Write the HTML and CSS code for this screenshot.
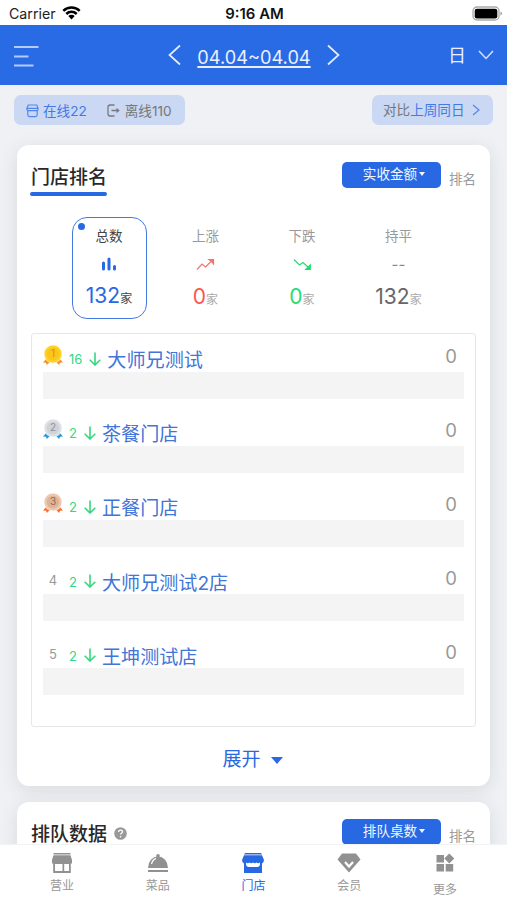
FILE: index.html
```html
<!DOCTYPE html>
<html lang="zh-CN">
<head>
<meta charset="utf-8">
<title>门店排名</title>
<link rel="stylesheet" href="styles.css">
</head>
<body>
<div class="app">
  <div class="status">
    <div class="carrier"><span>Carrier</span>
      <svg width="19" height="15" viewBox="0 0 19 15"><g fill="none" stroke="#000" stroke-width="2.500"><path d="M1.300 5.800a11.700 11.700 0 0 1 16.400 0"/><path d="M4.300 9a7.400 7.400 0 0 1 10.400 0"/></g><path d="M6.300 11.100a4.600 4.600 0 0 1 6.400 0L9.500 14.400z"/></svg>
    </div>
    <div class="clock">9:16 AM</div>
    <div class="battery"><svg width="31" height="16" viewBox="0 0 31 16"><rect x="1" y="1" width="26" height="13" rx="4" fill="#fff" stroke="#aaa" stroke-width="1.300"/><rect x="2.700" y="2.800" width="22.600" height="9.600" rx="2.200"/><path d="M28.500 5.400q3 2.200 0 4.400z" fill="#999"/></svg></div>
  </div>
  <header class="header">
    <svg class="menu" width="26" height="24" viewBox="0 0 26 24" fill="none" stroke="#b4ccfb" stroke-width="2"><path d="M0 2h24.500M0 11.500h14.500M0 20.500h19.500"/></svg>
    <div class="dates">
      <svg width="13" height="22" viewBox="0 0 13 22" fill="none" stroke="#e5edff" stroke-width="1.700"><path d="M12 1.500 1.500 11 12 20.500"/></svg>
      <span class="range">04.04~04.04</span>
      <svg width="13" height="22" viewBox="0 0 13 22" fill="none" stroke="#e5edff" stroke-width="1.700"><path d="M1 1.500 11.500 11 1 20.500"/></svg>
    </div>
    <div class="period"><span>日</span><svg width="16" height="10" viewBox="0 0 16 10" fill="none" stroke="#d5e2ff" stroke-width="1.500"><path d="m1 1 7 7.500L15 1"/></svg></div>
  </header>
  <main class="content">
    <div class="filters">
      <div class="pill state">
        <svg width="13" height="14" viewBox="0 0 13 14" fill="none" stroke="#5485ea" stroke-width="1.200"><path d="M2.200 1h8.600l1.400 3.600q0 2-1.600 2H2.400q-1.600 0-1.600-2zM1 4.300h11M1.800 6.800v4q0 1.800 1.800 1.800h5.800q1.800 0 1.800-1.800v-4"/></svg>
        <span class="online">在线22</span>
        <svg class="exit" width="14" height="14" viewBox="0 0 14 14" fill="none" stroke="#77797f" stroke-width="1.300"><path d="M7.500 1H3.200Q1 1 1 3.200v6.600Q1 12 3.200 12h4.300M4.500 6.500h7"/><path d="m9.500 3.800 3.200 2.700-3.200 2.700z" fill="#77797f" stroke="none"/></svg>
        <span>离线110</span>
      </div>
      <div class="pill compare"><span>对比<b>上周同日</b></span><svg width="8" height="12" viewBox="0 0 8 12" fill="none" stroke="#5485ea" stroke-width="1.200"><path d="m1 1 6 5-6 5"/></svg></div>
    </div>

    <section class="card ranking">
      <div class="card-head">
        <h2 class="underlined">门店排名</h2>
        <div class="sort"><button class="select">实收金额<i class="caret"></i></button><span>排名</span></div>
      </div>
      <div class="stats">
        <div class="stat selected"><i class="dot"></i>
          <div class="label">总数</div>
          <div class="glyph"><svg width="16" height="14" viewBox="0 0 16 14" stroke="#2868e2" stroke-width="3" stroke-linecap="round"><path d="M2.500 6v6M8 2v10M13.500 9.500V12"/></svg></div>
          <div class="value">132<small>家</small></div>
        </div>
        <div class="stat up">
          <div class="label">上涨</div>
          <div class="glyph"><svg width="19" height="13" viewBox="0 0 19 13" fill="none" stroke="#f4736e" stroke-width="1.200"><path d="m1 11.500 5-5.500 3.500 3 5.500-5.500"/><path d="M13 1.500h4.500V6L15.500 3.500z" fill="#f4736e"/></svg></div>
          <div class="value">0<small>家</small></div>
        </div>
        <div class="stat down">
          <div class="label">下跌</div>
          <div class="glyph"><svg width="19" height="13" viewBox="0 0 19 13" fill="none" stroke="#24dc72" stroke-width="1.200"><path d="m1 1.500 5.500 5.500L10 4.500 15 9"/><path d="M17.300 7v4.500h-4.600z" fill="#24dc72"/></svg></div>
          <div class="value">0<small>家</small></div>
        </div>
        <div class="stat">
          <div class="label">持平</div>
          <div class="glyph">--</div>
          <div class="value">132<small>家</small></div>
        </div>
      </div>
      <ol class="list">
        <li><div class="row"><span class="medal"><svg width="20" height="21" viewBox="0 0 20 21"><path d="M4 13 0 17.500l3 .2.800 2.300L8 16zM16 13l4 4.500-3 .2-.8 2.300L12 16z" fill="#f5922c"/><circle cx="10" cy="9" r="9" fill="#ffd21f" stroke="#fff" stroke-width=".6"/><circle cx="10" cy="9" r="6.300" fill="#fbc51b"/><text x="10" y="12.200" fill="#d98d0b">1</text></svg></span><span class="delta">16</span><svg class="arrow" width="12" height="14" viewBox="0 0 12 14"><path d="M6 .5V13M.7 7.700 6 13l5.300-5.300"/></svg><span class="name">大师兄测试</span><span class="amount">0</span></div><div class="bar"></div></li>
        <li><div class="row"><span class="medal"><svg width="20" height="21" viewBox="0 0 20 21"><path d="M4 13 0 17.500l3 .2.800 2.300L8 16zM16 13l4 4.500-3 .2-.8 2.300L12 16z" fill="#2499dc"/><circle cx="10" cy="9" r="9" fill="#dddfe4" stroke="#fff" stroke-width=".6"/><circle cx="10" cy="9" r="6.300" fill="#cfd3d9"/><text x="10" y="12.200" fill="#8d939d">2</text></svg></span><span class="delta">2</span><svg class="arrow" width="12" height="14" viewBox="0 0 12 14"><path d="M6 .5V13M.7 7.700 6 13l5.300-5.300"/></svg><span class="name">茶餐门店</span><span class="amount">0</span></div><div class="bar"></div></li>
        <li><div class="row"><span class="medal"><svg width="20" height="21" viewBox="0 0 20 21"><path d="M4 13 0 17.500l3 .2.800 2.300L8 16zM16 13l4 4.500-3 .2-.8 2.300L12 16z" fill="#f9712d"/><circle cx="10" cy="9" r="9" fill="#edc8b1" stroke="#fff" stroke-width=".6"/><circle cx="10" cy="9" r="6.300" fill="#dfb397"/><text x="10" y="12.200" fill="#956a51">3</text></svg></span><span class="delta">2</span><svg class="arrow" width="12" height="14" viewBox="0 0 12 14"><path d="M6 .5V13M.7 7.700 6 13l5.300-5.300"/></svg><span class="name">正餐门店</span><span class="amount">0</span></div><div class="bar"></div></li>
        <li><div class="row"><span class="medal">4</span><span class="delta">2</span><svg class="arrow" width="12" height="14" viewBox="0 0 12 14"><path d="M6 .5V13M.7 7.700 6 13l5.300-5.300"/></svg><span class="name">大师兄测试2店</span><span class="amount">0</span></div><div class="bar"></div></li>
        <li><div class="row"><span class="medal">5</span><span class="delta">2</span><svg class="arrow" width="12" height="14" viewBox="0 0 12 14"><path d="M6 .5V13M.7 7.700 6 13l5.300-5.300"/></svg><span class="name">王坤测试店</span><span class="amount">0</span></div><div class="bar"></div></li>
      </ol>
      <div class="expand">展开<i class="caret"></i></div>
    </section>

    <section class="card queue">
      <div class="card-head">
        <h2>排队数据</h2>
        <svg class="help" width="13" height="13" viewBox="0 0 13 13"><circle cx="6.500" cy="6.500" r="6.300" fill="#999"/><path d="M4.600 5q0-1.900 2-1.900t1.900 1.700q0 .9-1 1.500-.9.500-.9 1.300" fill="none" stroke="#fff" stroke-width="1.300"/><circle cx="6.600" cy="9.600" r=".8" fill="#fff"/></svg>
        <div class="sort"><button class="select">排队桌数<i class="caret"></i></button><span>排名</span></div>
      </div>
    </section>
  </main>
  <nav class="tabs">
    <a class="tab"><svg width="22" height="20" viewBox="0 0 22 20"><path d="M2.500 0h17v1.500h-17zM2.500 2.300h17L21 7v3.500h-1.200V20H2.200v-9.500H1V7z" fill="#919191"/><path d="M4 11h7.500v7H4zM13.200 11H18v7h-4.800z" fill="#fff"/></svg><span>营业</span></a>
    <a class="tab"><svg width="22" height="20" viewBox="0 0 22 20" fill="#919191"><circle cx="11" cy="2.800" r="1.800"/><path d="M1 15a10 11.500 0 0 1 20 0zM1 17h20v2H1z"/><path d="M4.500 11q1-4.200 4.500-5.600" stroke="#fff" stroke-width="1.200" fill="none"/></svg><span>菜品</span></a>
    <a class="tab active"><svg width="24" height="20" viewBox="0 0 24 20" fill="#2868e2"><path d="M4 0h16l1 1.500H3zM3 2.300h18L23 7q0 2.500-2 3.500v9.500H3v-9.500Q1 9.500 1 7z"/><path d="M5 9.500q1.800 1.600 3.500 0 1.700 1.600 3.500 0 1.800 1.600 3.500 0 1.700 1.600 3.500 0V11q0 3-3 3H8q-3 0-3-3z" fill="#fff"/></svg><span>门店</span></a>
    <a class="tab"><svg width="24" height="20" viewBox="0 0 24 20"><path d="M5 .5h14l4.500 6L12 19.500.5 6.500z" fill="#919191"/><path d="m8 9 4 4.500L16 9" fill="none" stroke="#fff" stroke-width="2.200"/></svg><span>会员</span></a>
    <a class="tab more"><svg width="20" height="20" viewBox="0 0 20 20" fill="#919191"><path d="M1.500 2H9v7.500H1.500zM1.500 11H9v7.500H1.500zM10.700 11h7.500v7.500h-7.500zM14.300.5l5 5-5 5-5-5z"/></svg><span>更多</span></a>
  </nav>
</div>
</body>
</html>
```
FILE: styles.css
```css
* { box-sizing: border-box; }
body { margin: 0; font-family: Inter, "Noto Sans CJK SC", sans-serif; color: #777; }
svg { display: block; flex: none; }
h2, ol { margin: 0; padding: 0; }

.app { display: flex; flex-direction: column; width: 507px; height: 900px; overflow: hidden; background: #eff1f4; }

.status { display: grid; grid-template-columns: 1fr auto 1fr; align-items: center; height: 25px; flex: none; padding: 2px 7px 0 9px; background: #fff; font-size: 14px; color: #222; }
.carrier { display: flex; align-items: center; gap: 6px; font-size: 14.2px; }
.carrier svg { margin-top: -3px; }
.clock { font-size: 14.9px; font-weight: 600; color: #111; }
.battery { display: flex; justify-content: flex-end; margin-right: -3px; }

.header { display: grid; grid-template-columns: 1fr auto 1fr; align-items: center; height: 60px; flex: none; padding: 0 13px 0 14px; background: #296be5; color: #eaf0ff; }
.menu { margin-top: 4px; }
.dates { display: flex; align-items: center; gap: 16px; }
.range { font-size: 18.2px; line-height: 24px; text-decoration: underline; text-decoration-thickness: 1.5px; text-underline-offset: 2px; margin-top: 3px; }
.period { display: flex; justify-content: flex-end; align-items: center; gap: 12px; font-size: 18px; line-height: 24px; }
.period span { margin-top: 2px; }

.content { flex: 1; min-height: 0; overflow: hidden; padding: 10px 17px 0; }
.filters { display: flex; justify-content: space-between; margin: 0 -3px 20px; }
.pill { display: flex; align-items: center; height: 30px; border-radius: 7px; background: #cad8f3; font-size: 13.6px; line-height: 20px; }
.state { width: 171px; padding: 2px 0 0 12px; gap: 4px; }
.online, .compare b { color: #4479e4; font-weight: 400; }
.exit { margin-left: 16px; }
.compare { width: 121px; padding-left: 11px; gap: 7px; }

.card { background: #fff; border-radius: 12px; box-shadow: 0 4px 18px rgba(70, 76, 85, .13); }
.ranking { height: 641px; padding: 17px 14px 0; margin-bottom: 16px; }
.queue { height: 120px; padding: 17px 14px 0; }
.card-head { display: flex; align-items: flex-start; }
h2 { font-size: 19px; font-weight: 500; line-height: 32px; color: #292929; }
.queue h2 { margin-top: 7px; line-height: 18px; }
.underlined { height: 34px; }
.underlined::after { content: ""; display: block; height: 4px; margin: -2px 0 0 -1px; border-radius: 2px; background: #2868e2; }
.help { margin: 8px 0 0 7px; }
.sort { display: flex; margin-left: auto; gap: 8px; font-size: 13.5px; line-height: 20px; color: #999; }
.sort > span { margin-top: 7px; }
.select { display: flex; align-items: center; justify-content: center; width: 99px; height: 26px; padding: 0 0 2px 5px; border: 0; border-radius: 5px; background: #2868e2; color: #f1f5ff; font: 400 13.6px/20px Inter, "Noto Sans CJK SC", sans-serif; }
.caret { width: 0; height: 0; border: solid transparent; border-top-color: currentColor; border-width: 4px 3.5px 0; margin-left: 2px; }

.stats { display: grid; grid-template-columns: repeat(4, 96.5px); margin: 21px 0 14px 29.5px; }
.stat { position: relative; display: flex; flex-direction: column; align-items: center; width: 75px; height: 102px; margin-left: 11px; padding-top: 9px; }
.selected { border: 1.5px solid #4479e2; border-radius: 15px; padding-top: 8px; }
.dot { position: absolute; left: 5px; top: 5px; width: 7px; height: 7px; border-radius: 50%; background: #2868e2; }
.label { font-size: 13.5px; line-height: 20px; color: #999; }
.selected .label, .selected .value small { color: #444; }
.glyph { display: flex; align-items: center; height: 36px; font-size: 15px; color: #888; }
.value { font-size: 21px; line-height: 30px; color: #666; white-space: nowrap; }
.value small { font-size: 12px; color: #aaa; }
.selected .value { color: #2868e2; line-height: 28px; }
.up .value { color: #fa5652; }
.down .value { color: #24dc72; }

.list { list-style: none; width: 445px; height: 394px; padding: 10.5px 11px 0; border: 1.5px solid #e7e7e7; border-radius: 3px; }
.list li { height: 74.2px; }
.row { display: flex; align-items: center; height: 27px; }
.medal { width: 20px; margin: -1px 6px 0 0; text-align: center; font-size: 13px; color: #999; }
.medal svg { margin-top: -5px; }
.medal text { font-size: 10px; text-anchor: middle; }
.delta { font-size: 13px; line-height: 20px; color: #35d87e; margin-top: 2px; }
.arrow { fill: none; stroke: #35d87e; stroke-width: 1.6; margin: 1px 6px 0 7px; }
.name { font-size: 19.1px; line-height: 28px; color: #4175d8; margin-top: 4px; }
.amount { margin-left: auto; padding-right: 7px; font-size: 18.5px; color: #999; margin-top: -5px; }
.bar { height: 27px; background: #f4f4f4; }
.expand { display: flex; align-items: center; justify-content: center; height: 66px; padding-right: 2px; color: #2868e2; font-size: 19px; line-height: 28px; }
.expand .caret { border-width: 7px 6px 0; margin-left: 10px; }

.tabs { display: flex; height: 56px; flex: none; padding: 0 14px; background: #fff; border-top: 1px solid #f2f2f2; }
.tab { flex: 1; display: flex; flex-direction: column; align-items: center; padding-top: 8px; gap: 5px; font-size: 12px; line-height: 16px; color: #999; }
.active { color: #2868e2; }
.more { gap: 9px; }
```
